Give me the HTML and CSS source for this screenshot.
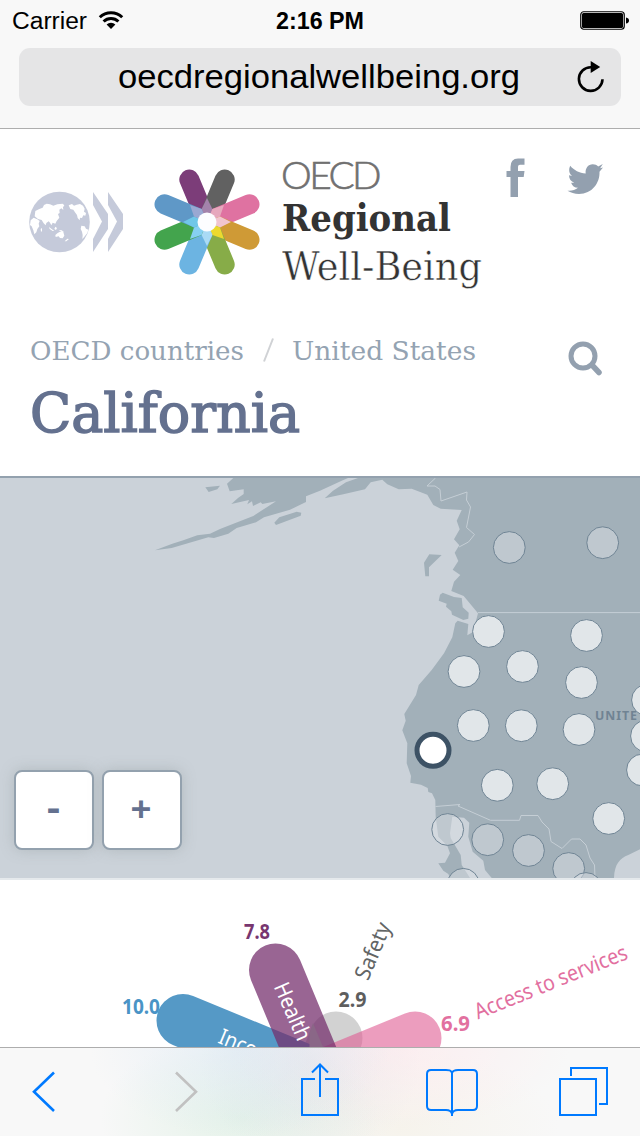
FILE: index.html
```html
<!DOCTYPE html>
<html lang="en">
<head>
<meta charset="utf-8">
<title>California – OECD Regional Well-Being</title>
<link rel="stylesheet" href="styles.css">
</head>
<body>
<div class="screen">
  <div class="browser">
    <div class="status">
      <div class="carrier"><svg class="carrier-text" viewBox="0 0 76 30"><text x="0" y="23" textLength="75" lengthAdjust="spacingAndGlyphs">Carrier</text></svg>
        <svg class="wifi" viewBox="0 0 26 20"><path d="M1.800 7.200a16 16 0 0 1 22.400 0M5.600 11.500a10.500 10.500 0 0 1 14.800 0" fill="none" stroke="#000" stroke-width="3"/><path d="M8.600 14.500a6.200 6.200 0 0 1 8.800 0L13 19z"/></svg>
      </div>
      <svg class="time" viewBox="0 0 90 30"><text x="0" y="23" textLength="88" lengthAdjust="spacingAndGlyphs">2:16 PM</text></svg>
      <svg class="battery" viewBox="0 0 50 20"><rect x=".75" y=".75" width="43.5" height="17.5" rx="3" fill="none" stroke="#000" stroke-width="1.2"/><rect x="2" y="2" width="41" height="15" rx="1.5"/><path d="M46 6.500q3 .5 3 3t-3 3z"/></svg>
    </div>
    <div class="address">
      <svg class="url" viewBox="0 0 404 44"><text x="0" y="31" textLength="402" lengthAdjust="spacingAndGlyphs">oecdregionalwellbeing.org</text></svg>
      <svg class="reload" viewBox="0 0 28 32"><path d="M25.500 18.300A11.800 11.800 0 1 1 14 6.300" fill="none" stroke="#000" stroke-width="2.600"/><path d="M13.700 0v12l9.500-6z"/></svg>
    </div>
  </div>

  <header class="site">
    <div class="brand">
      <svg class="globe" viewBox="0 0 96 62">
        <circle cx="30.500" cy="31" r="30.300" fill="#c5cada"/>
        <g fill="#fff" transform="translate(-29 -41.300) scale(.33333)">
          <path d="M104 200L106 184 118 178 128 174 132 166 140 162 150 164 160 168 172 164 188 162 193 167 189 173 190 181 184 176 178 180 179 190 174 193 178 204 170 214 166 222 158 219 154 227 150 219 146 215 139 220 137 227 131 221 125 211 114 208z"/>
          <path d="M92 212L101 204 112 209 119 214 116 222 118 230 112 238 109 248 103 254 100 242 95 230 90 226z"/>
          <path d="M206 167L216 163 222 168 230 165 240 163 249 168 254 177 252 186 258 190 256 198 250 197 246 205 240 204 239 212 233 205 231 196 226 189 220 180 211 178z"/>
          <path d="M244 228L254 230 258 237 265 240 262 250 253 261 247 268 248 256 246 246 242 238z"/>
          <path d="M166 256L173 250 180 246 190 247 193 258 188 266 180 265 176 260 167 262zM122 238L126 235 126 245 123 246zM147 232L155 238 163 244 158 244 149 238zM166 231L171 235 168 241 163 238zM176 241L185 242 192 247 184 246zM202 267L207 268 199 275 194 275z"/>
        </g>
        <path d="M64 1l15 22v15L64 61V48l9-17.500L64 14zM79 1l15 22v15L79 61V48l9-17.500L79 14z" fill="#c5cada"/>
      </svg>
      <svg class="flower" viewBox="-53 -53 106 106">
        <g stroke-width="20" stroke-linecap="round">
          <path d="M0 0L-17.700-42.500" stroke="#7c3d79"/><path d="M0 0L17.700-42.500" stroke="#616161"/>
          <path d="M0 0L42.500-17.700" stroke="#df72a1"/><path d="M0 0L42.500 17.700" stroke="#cf9a36"/>
          <path d="M0 0L17.700 42.500" stroke="#87ac48"/><path d="M0 0L-17.700 42.500" stroke="#6cb4e2"/>
          <path d="M0 0L-42.500 17.700" stroke="#43a44d"/><path d="M0 0L-42.500-17.700" stroke="#5f98c7"/>
        </g>
        <path d="M0 0L-5.400-13 0-24 5.400-13z" fill="#a383ab"/>
        <path d="M0 0L5.400-13 17-17 13-5.400z" fill="#e6a8bd"/>
        <path d="M0 0L13-5.400 24 0 13 5.400z" fill="#f1c5d0"/>
        <path d="M0 0L13 5.400 17 17 5.400 13z" fill="#ecd92f"/>
        <path d="M0 0L5.400 13 0 24-5.400 13z" fill="#a9daf5"/>
        <path d="M0 0L-5.400 13-17 17-13 5.400z" fill="#86d0f2"/>
        <path d="M0 0L-13 5.400-24 0-13-5.400z" fill="#70c7e8"/>
        <path d="M0 0L-13-5.400-17-17-5.400-13z" fill="#9aa8d2"/>
        <circle r="9.500" fill="#fcfdff"/>
      </svg>
      <svg class="wordmark" viewBox="0 0 204 154">
        <text class="w-oecd" x="-1" y="39" textLength="98" lengthAdjust="spacingAndGlyphs">OECD</text>
        <text class="w-regional" x="0" y="81" textLength="169" lengthAdjust="spacingAndGlyphs">Regional</text>
        <text class="w-being" x="0" y="129.500" textLength="200" lengthAdjust="spacingAndGlyphs">Well-Being</text>
      </svg>
      <div class="social">
        <svg class="fb" viewBox="0 0 19 40"><path d="M4.500 39V19H.5v-6h4V9Q4.500.5 12 .5h6.500v6.300H14q-2 0-2 2V13h6.500l-.8 6H12v20z" fill="#93a0af"/></svg>
        <svg class="tw" viewBox="0 0 37 32"><path d="M36 4.500l-3.500 4.300C33 20 25 31 12 31 7.500 31 3.700 29.600.5 27.700c4 .4 7.700-.6 10.500-2.900-3.500 0-5.900-2.200-6.900-5.100h3.200C4 18.600 2 16 2 12.300l3.100.8C2 10.500 1.400 6.500 3.200 2.700c3.900 4.600 9 7.300 15.500 7.700C18 5.500 21 1.200 25.800 1.200c2.200 0 4 .9 5.400 2.300L35.800 1l-2.700 4.200z" fill="#93a0af"/></svg>
      </div>
    </div>
    <div class="location">
      <div class="names">
        <svg class="crumbs" viewBox="0 0 450 36">
          <text x="0" y="27" textLength="214" lengthAdjust="spacingAndGlyphs">OECD countries</text>
          <path d="M234 28.500L243 5.500" stroke="#d0d2d5" stroke-width="2"/>
          <text x="262" y="27" textLength="184" lengthAdjust="spacingAndGlyphs">United States</text>
        </svg>
        <svg class="region" viewBox="0 0 280 65"><text x="0" y="48.500" textLength="270" lengthAdjust="spacingAndGlyphs">California</text></svg>
      </div>
      <svg class="search" viewBox="0 0 36 36" fill="none" stroke="#93a0af"><circle cx="15" cy="15" r="12" stroke-width="5"/><path d="M24 24l7 7.500" stroke-width="5.500" stroke-linecap="round"/></svg>
    </div>
  </header>

  <main class="map">
    <svg class="map-canvas" viewBox="0 478 640 400">
      <g fill="#a2b0b9">
        <path d="M233.300 478L227 483.700 229.700 491.300 243.700 489.300V494L238 498 231.300 504 249 500 247.300 504.300 252 501.300 253 506 260.700 502.300 262.300 504 276 501.300 266 507.700 253.300 516 220 529 210 533.700 197.300 535.300 183.300 540.300 172.300 543.700 155 550.300 171.700 548 208.300 537.300 214 538 228.300 533.700 236.700 528 256 522.300 264 517.300 290 509.700 306 502V496.300L320 490.700 341.700 480.700 348 478z"/>
        <path d="M358 478L346 482.300 333 490.700 324.700 498.300 343.300 494.300 365 489.300 370.700 482.300 382.300 479.700 387.300 484.300 398.700 489.300 411.700 488.700 427.300 494.700 433.300 505 440.700 508.700 461.700 510 456.700 520.700 459.700 529.300 454 539.300 459.300 545.300 454.700 552.700 458.300 561 452.700 569.700 460.300 575 454 581.700 451.300 591 463.700 596 478 613.300 473 632 467.300 635.300 468.300 624 457.700 620.700 455.300 623.300 452.300 637.300 444 653.300 431.700 670 418.700 685 416 695 404.300 714 405.700 720.700 402.300 730.300 407.300 743.300 406.700 763.300 411 776 410.300 782.700 421 784.700 427.700 788 428.300 792 432 793.300 435.300 800 435.700 816.700 438.300 836.700 447.300 845.700 450 853.300 445 862.700 438.300 863.300 443.300 870.700 448.300 874 450 878H470L461.700 865 460.700 855 450.700 838 450 833.300 452.300 816.700 464 817.700 469.300 822.700 468.300 836.700 472.700 851.700 483.300 860.700 485 870 491.700 878H614C614.500 864 620 858 628.300 855L640 849.300V478z"/>
        <path d="M205.300 487.300L220 485.700 217.300 489.300 208.700 492zM274.300 522.700L279.300 517.300 296.700 511.700 301.300 512.700 300.700 515.700 276 525zM424 562.700L429.300 554.300 441.700 555 429 567.300V576.300H425.300zM438.700 600.700L440 594.700 442.700 592.700 454 597 461.700 598 462.700 607.300 468.700 612.700 468.300 618.700 463.300 620 452 614.700 451.300 611.300 446 606.700 446.700 603.700z"/>
      </g>
      <path d="M435.500 478L427 486H435L440 489.500 441 501 467 492 466.500 500 470.500 507 466.500 527.500 474.500 534.500 468.500 542 459 547M478 612.600H640M435.500 806.500L460 804.500 458 806 490.500 820.300H519.500L521 815.500H538L542 822 549 829 551 841.500 562 848.500 571.500 839H580L586 845 590 858 594.500 865 595 878" fill="none" stroke="#c5ced5" stroke-width="1"/>
      <text class="country" x="595" y="720" textLength="43" lengthAdjust="spacingAndGlyphs">UNITE</text>
      <g fill="#e1e6e9" stroke="#6f8494" stroke-width="1">
        <circle cx="488.500" cy="631.500" r="15.900"/><circle cx="586.500" cy="635.500" r="15.900"/><circle cx="464" cy="671.500" r="15.900"/><circle cx="522.500" cy="666.500" r="15.900"/><circle cx="581.500" cy="682.500" r="15.900"/><circle cx="473.300" cy="725.500" r="15.900"/><circle cx="521.300" cy="725.700" r="15.900"/><circle cx="579" cy="729.500" r="15.900"/><circle cx="647.500" cy="700" r="15.900"/><circle cx="646.500" cy="736" r="15.900"/><circle cx="642.500" cy="770" r="15.900"/><circle cx="497.300" cy="785.300" r="15.900"/><circle cx="552.700" cy="783.700" r="15.900"/><circle cx="608.700" cy="818.500" r="15.900"/>
      </g>
      <g fill="#dce0e5" fill-opacity=".5" stroke="#6f8494" stroke-width="1">
        <circle cx="509.300" cy="547.500" r="15.900"/><circle cx="602.700" cy="542.700" r="15.900"/><circle cx="447.700" cy="829.500" r="15.900"/><circle cx="487.700" cy="839.700" r="15.900"/><circle cx="528.500" cy="850.500" r="15.900"/><circle cx="568.700" cy="868.500" r="15.900"/><circle cx="586" cy="888.500" r="15.900"/><circle cx="463.300" cy="884.300" r="15.900"/>
      </g>
      <circle cx="433" cy="750.300" r="16" fill="#fff" stroke="#3d5265" stroke-width="5"/>
    </svg>
    <div class="zoom">
      <button class="zoom-btn" aria-label="Zoom out"><svg viewBox="0 0 76 76"><text x="31" y="48" textLength="13" lengthAdjust="spacingAndGlyphs">-</text></svg></button>
      <button class="zoom-btn" aria-label="Zoom in"><svg viewBox="0 0 76 76"><text x="26.500" y="50" textLength="21" lengthAdjust="spacingAndGlyphs">+</text></svg></button>
    </div>
  </main>

  <section class="chart">
    <svg class="chart-canvas" viewBox="0 880 640 167">
      <g stroke-width="53" stroke-linecap="round">
        <path d="M320 1077L336 1038" stroke="#d2d2d2"/>
        <path d="M320 1077L415 1038" stroke="#e05c92" stroke-opacity=".6"/>
        <path d="M320 1077L183 1020.500" stroke="#5599c6"/>
        <path d="M320 1077L275.500 970" stroke="#762f6d" stroke-opacity=".74"/>
      </g>
      <path d="M309.500 1047V1033L313 1023 323 1047z" fill="#8a6787"/>
      <g class="score">
        <text x="122" y="1014" textLength="38" lengthAdjust="spacingAndGlyphs" fill="#4a94c6">10.0</text>
        <text x="244" y="939" textLength="26" lengthAdjust="spacingAndGlyphs" fill="#78366f">7.8</text>
        <text x="338.500" y="1007" textLength="28" lengthAdjust="spacingAndGlyphs" fill="#5e5e5e">2.9</text>
        <text x="441" y="1031" textLength="29" lengthAdjust="spacingAndGlyphs" fill="#e2709f">6.9</text>
      </g>
      <g class="topic">
        <text transform="translate(217 1042.500) rotate(22.500)" textLength="69" lengthAdjust="spacingAndGlyphs" fill="#fff">Income</text>
        <text transform="translate(273.500 986.500) rotate(66.500)" textLength="61" lengthAdjust="spacingAndGlyphs" fill="#fff">Health</text>
        <text transform="translate(368 981.500) rotate(-67)" textLength="60" lengthAdjust="spacingAndGlyphs" fill="#626565">Safety</text>
        <text transform="translate(478 1019.500) rotate(-22)" textLength="163" lengthAdjust="spacingAndGlyphs" fill="#e2709f">Access to services</text>
      </g>
    </svg>
  </section>

  <nav class="toolbar">
    <svg class="tools" viewBox="0 1048 640 88" fill="none" stroke="#007aff" stroke-width="2">
      <path d="M54 1072.500L34 1091.700 54 1111" stroke-width="2.600"/>
      <path d="M176 1072.500L196 1091.700 176 1111" stroke="#c1c1c1" stroke-width="2.600"/>
      <path d="M315 1079H302V1115H338V1079H325M320 1097V1065M312 1072.500L320 1064.500 328 1072.500"/>
      <path d="M452 1116V1073C451 1070 449 1070 446 1070H431Q427 1070 427 1074V1106Q427 1110 431 1110H446Q451 1110 452 1114Q453 1110 458 1110H473Q477 1110 477 1106V1074Q477 1070 473 1070H458Q453 1070 452 1073"/>
      <path d="M560 1079H596V1115H560zM571 1076V1068H607V1104H599"/>
    </svg>
  </nav>
</div>
</body>
</html>
```

FILE: styles.css
```css
* { box-sizing: border-box; }
body { margin: 0; background: #fff; font-family: "Liberation Sans", sans-serif; }
svg { display: block; flex: none; }
.screen { width: 640px; height: 1136px; overflow: hidden; display: flex; flex-direction: column; }

.browser { height: 129px; background: #f8f8f8; border-bottom: 1px solid #aeaeae; }
.status { height: 48px; display: grid; grid-template-columns: 264px 1fr auto; align-items: start; padding: 6px 10px 0 12px; }
.carrier { display: flex; gap: 10px; }
.carrier-text { width: 76px; height: 30px; font-size: 23px; }
.wifi { width: 26px; height: 20px; margin-top: 4px; }
.time { width: 90px; height: 30px; font-size: 23px; font-weight: bold; }
.battery { width: 50px; height: 20px; margin-top: 5px; }
.address { height: 58px; margin: 0 19px; border-radius: 11px; background: #e5e5e6; display: flex; align-items: center; padding-left: 99px; }
.url { width: 404px; height: 44px; margin-top: 4px; font-size: 34px; }
.reload { width: 28px; height: 32px; margin-left: 55px; }

.site { height: 349px; background: #fff; border-bottom: 2px solid #93a1ae; padding: 24px 36px 0 29px; }
.brand { display: flex; align-items: flex-start; height: 180px; }
.globe { width: 96px; height: 62px; margin-top: 38px; }
.flower { width: 106px; height: 106px; margin: 16px 0 0 29px; }
.wordmark { width: 204px; height: 154px; margin-left: 22px; margin-top: -3px; }
.w-oecd { font: 300 37.5px Lato, sans-serif; letter-spacing: -2.5px; fill: #707070; stroke: #707070; stroke-width: .6px; }
.w-regional { font: bold 38px "DejaVu Serif", serif; fill: #333; }
.w-being { font: 38.5px "DejaVu Serif", serif; fill: #333; stroke: #fff; stroke-width: .5px; }
.social { display: flex; margin-left: auto; gap: 42px; padding-top: 5px; }
.fb { width: 19px; height: 40px; }
.tw { width: 37px; height: 32px; margin-top: 5px; }
.location { display: flex; justify-content: space-between; }
.crumbs { width: 450px; height: 36px; margin-left: 1px; font: 26.5px "DejaVu Serif", serif; fill: #94a3b2; }
.region { width: 280px; height: 65px; margin: 14px 0 0 1px; font: 54px "DejaVu Serif", serif; fill: #64718f; stroke: #64718f; stroke-width: 1.5px; }
.search { width: 36px; height: 36px; margin-top: 8px; }

.map { display: grid; height: 402px; background: #cbd2d9; border-bottom: 2px solid #e5e9ec; }
.map-canvas, .zoom { grid-area: 1 / 1; }
.map-canvas { width: 640px; height: 400px; }
.country { font: bold 12.5px "Noto Sans", sans-serif; letter-spacing: 1px; fill: #708393; }
.zoom { align-self: end; display: flex; gap: 8px; padding: 0 0 28px 14px; }
.zoom-btn { width: 80px; height: 80px; padding: 0; border: 2px solid #93a1ae; border-radius: 8px; background: #fff; box-shadow: 0 0 14px rgba(130, 140, 140, .35); }
.zoom-btn svg { width: 76px; height: 76px; font: bold 36px "Noto Sans", sans-serif; fill: #64718f; }

.chart { height: 167px; background: #fff; }
.chart-canvas { width: 640px; height: 167px; }
.score { font: bold 21px "Noto Sans", sans-serif; }
.topic { font: 22px "Noto Sans", sans-serif; }

.toolbar {
  height: 89px;
  border-top: 1px solid #adadad;
  background:
    radial-gradient(ellipse 150px 90px at 240px 0, rgba(215, 230, 245, .5), transparent),
    radial-gradient(ellipse 170px 80px at 400px 0, rgba(255, 228, 232, .5), transparent),
    radial-gradient(ellipse 110px 100px at 310px 15px, rgba(215, 220, 228, .45), transparent),
    radial-gradient(ellipse 140px 85px at 240px 70px, rgba(215, 238, 222, .6), transparent),
    radial-gradient(ellipse 160px 80px at 400px 80px, rgba(245, 240, 228, .6), transparent),
    #f8f8f8;
}
.tools { width: 640px; height: 88px; }
```
